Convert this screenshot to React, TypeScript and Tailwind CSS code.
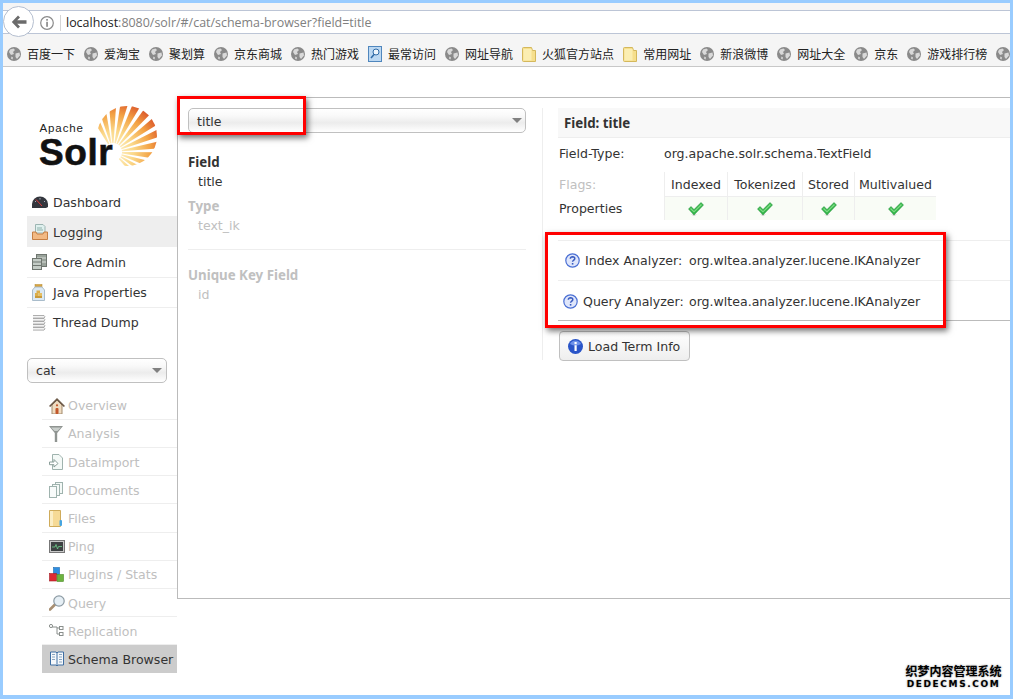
const F = '"DejaVu Sans", Verdana, sans-serif';
const B = '"Noto Sans", "DejaVu Sans", sans-serif';

function Globe() {
  return (
    <svg width="14" height="14" viewBox="0 0 14 14" className="shrink-0">
      <circle cx="7" cy="7" r="7" fill="#8a8a8a" />
      <path d="M3 2.5 6.5 1.5 8 3 6 5 7 7 4 8 2 5ZM8.5 6.5 12.5 5.5 13 8.5 10 12 8.5 10ZM4.5 9.5 6 10.5 5.5 12.5 4 11.5Z" fill="#d9d9d9" />
    </svg>
  );
}
function Folder() {
  return (
    <svg width="14" height="15" viewBox="0 0 14 15" className="shrink-0">
      <path d="M.5 1.5 Q.5.5 1.5.5H9.5L10.5 3.5H13.5V14.5H1.5Q.5 14.5.5 13.5Z" fill="#f6df8d" stroke="#d4b85c" />
      <rect x="1.5" y="2" width="8" height="11.5" fill="#fbeeb2" />
    </svg>
  );
}
function BlueSearch() {
  return (
    <svg width="14" height="16" viewBox="0 0 14 16" className="shrink-0">
      <rect x=".5" y=".5" width="13" height="15" fill="#bcd8f2" stroke="#4f86bd" />
      <circle cx="8" cy="6" r="3" fill="#eef6fd" stroke="#2f6aa6" />
      <path d="M6 8.5 3 12" stroke="#2f6aa6" strokeWidth="1.6" />
    </svg>
  );
}
function Caret() {
  return <div className="w-0 h-0 border-x-[5px] border-x-transparent border-t-[5px] border-t-[#808080]" />;
}
function Check() {
  return (
    <svg width="16" height="14" viewBox="0 0 16 14">
      <path d="M3 12.5 6 14 9 12.5Z" fill="#c8c8c8" />
      <path d="M.5 7 3 4.5 6 7.5 13 .5 15.5 3 6 13Z" fill="#35b54a" stroke="#23913a" strokeWidth=".5" />
      <path d="M2 7 3 6 6 9 13 2 14 3 6 10.5Z" fill="#7fdc85" />
    </svg>
  );
}
function Question() {
  return (
    <svg width="15" height="15" viewBox="0 0 15 15" className="shrink-0">
      <circle cx="7.5" cy="7.5" r="6.7" fill="#dfe6fb" stroke="#4a6fd4" strokeWidth="1.2" />
      <path d="M5.3 5.8Q5.5 3.8 7.6 3.8 9.8 3.9 9.8 5.6 9.8 6.7 8.5 7.3 7.6 7.8 7.6 8.8" fill="none" stroke="#3a5cc0" strokeWidth="1.5" />
      <rect x="6.8" y="10" width="1.6" height="1.6" fill="#3a5cc0" />
    </svg>
  );
}
function Info() {
  return (
    <svg width="15" height="15" viewBox="0 0 15 15" className="shrink-0">
      <circle cx="7.5" cy="7.5" r="7.5" fill="#2a55c8" />
      <path d="M2 5A6 6 0 0 1 13 5Q7.5 8 2 5Z" fill="#6e92ea" />
      <rect x="6.5" y="6.2" width="2.2" height="5.8" fill="#fff" />
      <rect x="6.5" y="3" width="2.2" height="2.2" fill="#fff" />
    </svg>
  );
}

function IDashboard() {
  return (
    <svg width="16" height="12" viewBox="0 0 16 12">
      <path d="M0 12V8A8 7.5 0 0 1 16 8V11L14 12Z" fill="#33363d" />
      <path d="M3 5 4 6M8 2V3.5M13 5 12 6" stroke="#aab" />
      <path d="M4 3.5 10 10" stroke="#e0393a" strokeWidth="1" />
    </svg>
  );
}
function ILogging() {
  return (
    <svg width="16" height="16" viewBox="0 0 16 16">
      <path d="M3.5.5H11L13 2.5V9H3.5Z" fill="#dff0ee" stroke="#9cb5b2" />
      <path d="M5 4H10M5 6H11" stroke="#8fb0aa" />
      <path d="M.5 8H4L5 10H11L12 8H15.5V15.5H.5Z" fill="#f2b983" stroke="#c67f43" />
    </svg>
  );
}
function ICore() {
  return (
    <svg width="15" height="16" viewBox="0 0 15 16">
      <rect x="4.5" y=".5" width="10" height="12" fill="#9aa39b" stroke="#6f7670" />
      <path d="M5 4H14M5 8H14" stroke="#d8dcd8" />
      <rect x=".5" y="4.5" width="9" height="11" fill="#c4ccc6" stroke="#6f7670" />
      <path d="M1 8H9M1 11.5H9" stroke="#6f7670" />
    </svg>
  );
}
function IJava() {
  return (
    <svg width="13" height="17" viewBox="0 0 13 17">
      <rect x="3" y=".5" width="7" height="2.5" fill="#d9a441" stroke="#b58a2f" strokeWidth=".5" />
      <path d="M3 3H10L12.5 6V16.5H.5V6Z" fill="#dce9f3" stroke="#a9bccb" />
      <rect x="3" y="9" width="3.5" height="3" fill="#dcae4a" />
      <rect x="6.5" y="9" width="3.5" height="3" fill="#e6bf63" />
      <rect x="4.5" y="6.5" width="3.5" height="2.5" fill="#dcae4a" />
      <rect x="3" y="12" width="7" height="2" fill="#c99a3a" />
    </svg>
  );
}
function IThread() {
  return (
    <svg width="14" height="16" viewBox="0 0 14 16">
      {[0.5, 3.5, 6.5, 9.5, 12.5].map((y) => (
        <path key={y} d={`M1 ${y}H12Q14 ${y + 1.3} 12 ${y + 2.6}H1`} fill="#f3f3f3" stroke="#9b9b9b" strokeWidth=".8" />
      ))}
    </svg>
  );
}
function IHome() {
  return (
    <svg width="16" height="16" viewBox="0 0 16 16">
      <path d="M3 7 8 2 13 7V16H3Z" fill="#efdcc1" stroke="#a38b6d" />
      <path d="M0 8 8 0 16 8 14.8 9 8 2.6 1.2 9Z" fill="#6d5a49" />
      <rect x="6.5" y="10" width="3" height="6" rx="1" fill="#c2572b" />
      <circle cx="8" cy="7.3" r="1.1" fill="#c2572b" />
    </svg>
  );
}
function IFunnel() {
  return (
    <svg width="14" height="16" viewBox="0 0 14 16">
      <path d="M0 0H14L8.2 7V16H5.8V7Z" fill="#8f9491" />
      <path d="M2 1.5H12L8.5 5H5.5Z" fill="#c9cecb" />
    </svg>
  );
}
function IImport() {
  return (
    <svg width="14" height="16" viewBox="0 0 14 16">
      <path d="M3.5.5H10L13.5 4V15.5H3.5Z" fill="#f4f9f7" stroke="#9fb3ae" />
      <path d="M.5 8H5V5.5L9 9.5 5 13V10.7H.5Z" fill="#fff" stroke="#8a9e99" />
    </svg>
  );
}
function IDocs() {
  return (
    <svg width="14" height="16" viewBox="0 0 14 16">
      <rect x="6.5" y=".5" width="7" height="11" fill="#f4f9f7" stroke="#9fb3ae" />
      <rect x="3.5" y="2.5" width="7" height="11" fill="#f4f9f7" stroke="#9fb3ae" />
      <rect x=".5" y="4.5" width="7" height="11" fill="#f8fbfa" stroke="#9fb3ae" />
    </svg>
  );
}
function IFiles() {
  return (
    <svg width="13" height="17" viewBox="0 0 13 17">
      <path d="M.5.5H11.5V16.5H.5Z" fill="#f6da96" stroke="#cfab5a" />
      <rect x="1" y="1" width="3" height="15" fill="#fbeec6" />
      <rect x="10.5" y="10" width="2.5" height="6" rx="1" fill="#47a5e0" />
    </svg>
  );
}
function IPing() {
  return (
    <svg width="16" height="13" viewBox="0 0 16 13">
      <rect x=".5" y=".5" width="15" height="12" fill="#c8c8c8" stroke="#777" />
      <rect x="2" y="2" width="12" height="9" fill="#3d4142" />
      <path d="M3 7H6L7 4.5 8.5 9 9.5 6.5H13" fill="none" stroke="#6fd08c" strokeWidth=".8" />
    </svg>
  );
}
function IPlugins() {
  return (
    <svg width="15" height="15" viewBox="0 0 15 15">
      <rect x="4.5" y=".5" width="6" height="7" fill="#2f8ee0" stroke="#1f6bb0" strokeWidth=".6" />
      <rect x=".5" y="6.5" width="7" height="7.5" fill="#dc2b34" stroke="#a31c23" strokeWidth=".6" />
      <rect x="8" y="7.5" width="6.5" height="7" fill="#6cb33f" stroke="#4d8a28" strokeWidth=".6" />
    </svg>
  );
}
function IQuery() {
  return (
    <svg width="16" height="16" viewBox="0 0 16 16">
      <path d="M6 9.5 1 14.5" stroke="#a88f72" strokeWidth="2.6" strokeLinecap="round" />
      <circle cx="10" cy="6" r="5.2" fill="#e6eff5" stroke="#8c9aa3" strokeWidth="1.2" />
    </svg>
  );
}
function IReplication() {
  return (
    <svg width="15" height="13" viewBox="0 0 15 13">
      <path d="M3 3H8V10H11M8 4H11" fill="none" stroke="#8a8f8c" />
      <circle cx="2" cy="2" r="1.6" fill="#fff" stroke="#8a8f8c" />
      <rect x="10.5" y="2.5" width="3.5" height="3" fill="#fff" stroke="#8a8f8c" />
      <rect x="10.5" y="8.5" width="3.5" height="3" fill="#fff" stroke="#8a8f8c" />
    </svg>
  );
}
function ISchema() {
  return (
    <svg width="16" height="16" viewBox="0 0 16 16">
      <path d="M1.5 1H7L8 2 9 1H14.5V14H9L8 15 7 14H1.5Z" fill="#f5f8fb" stroke="#3e6ea3" />
      <path d="M8 2V15" stroke="#3e6ea3" />
      <path d="M3 3.5H6M3 6H6M3 8.5H6M10 3.5H13M10 6H13M10 8.5H13M10 11H13" stroke="#8aa5c0" />
    </svg>
  );
}

function Logo() {
  const fx = 75;
  const fy = 47;
  const wedges = Array.from({ length: 13 }, (_, i) => {
    const a0 = ((-122 + i * 13.6) * Math.PI) / 180;
    const a1 = a0 + (8.6 * Math.PI) / 180;
    const r0 = 9;
    const r1 = 80;
    const p = (a: number, r: number) => `${(fx + Math.cos(a) * r).toFixed(1)},${(fy + Math.sin(a) * r).toFixed(1)}`;
    return `${p(a0, r0)} ${p(a0, r1)} ${p(a1, r1)} ${p(a1, r0)}`;
  });
  return (
    <svg width="124" height="76" viewBox="0 0 124 76" className="block">
      <defs>
        <clipPath id="sunclip">
          <circle cx="89" cy="31" r="30" />
        </clipPath>
        <radialGradient id="sungrad" gradientUnits="userSpaceOnUse" cx="75" cy="47" r="58">
          <stop offset="0" stopColor="#fff6d6" />
          <stop offset="0.35" stopColor="#fbd98a" />
          <stop offset="0.65" stopColor="#f3a244" />
          <stop offset="0.85" stopColor="#e0662f" />
          <stop offset="1" stopColor="#c33a28" />
        </radialGradient>
      </defs>
      <g clipPath="url(#sunclip)">
        {wedges.map((pts) => (
          <polygon key={pts} points={pts} fill="url(#sungrad)" />
        ))}
      </g>
      <text x="1.5" y="27" fontFamily='"Liberation Sans", Arial, sans-serif' fontSize="11.5" fill="#222" letterSpacing=".9">Apache</text>
      <text x="1" y="60" fontFamily='"Liberation Sans", Arial, sans-serif' fontWeight="700" fontSize="37" fill="#111" stroke="#111" strokeWidth=".6" letterSpacing=".6">Solr</text>
    </svg>
  );
}

const bookmarks: [string, string][] = [
  ['g', '百度一下'], ['g', '爱淘宝'], ['g', '聚划算'], ['g', '京东商城'], ['g', '热门游戏'], ['s', '最常访问'],
  ['g', '网址导航'], ['f', '火狐官方站点'], ['f', '常用网址'], ['g', '新浪微博'], ['g', '网址大全'], ['g', '京东'], ['g', '游戏排行榜'], ['g', ''],
];

const topNav: [string, () => React.ReactElement, string, string][] = [
  ['Dashboard', IDashboard, 'h-[30px]', 'pt-[2px]'],
  ['Logging', ILogging, 'h-[31px] -mt-px bg-[#eeeeee]', 'pt-[4px]'],
  ['Core Admin', ICore, 'h-[31px] border-b border-[#eeeeee]', 'pt-[2px]'],
  ['Java Properties', IJava, 'h-[30px] border-b border-[#eeeeee]', 'pt-[2px]'],
  ['Thread Dump', IThread, 'h-[30px]', 'pt-0'],
];

const subNav: [string, () => React.ReactElement, string, string][] = [
  ['Overview', IHome, 'h-[28px]', 'pt-[1px]'],
  ['Analysis', IFunnel, 'h-[28px]', 'pt-[1px]'],
  ['Dataimport', IImport, 'h-[28px]', 'pt-[3px]'],
  ['Documents', IDocs, 'h-[28px]', 'pt-[3px]'],
  ['Files', IFiles, 'h-[29px]', 'pt-[3px]'],
  ['Ping', IPing, 'h-[28px]', 'pt-[1px]'],
  ['Plugins / Stats', IPlugins, 'h-[28px]', 'pt-[1px]'],
  ['Query', IQuery, 'h-[28px]', 'pt-[3px]'],
  ['Replication', IReplication, 'h-[28px]', 'pt-[3px]'],
];

function Select({ label, className, textClass }: { label: string; className: string; textClass: string }) {
  return (
    <div className={`flex items-center justify-between border border-[#c0c0c0] rounded-[5px] bg-[linear-gradient(to_bottom,#ffffff_0%,#f9f9f9_30%,#ececec_60%,#f8f8f8_85%,#ffffff_100%)] text-[#333] ${className}`}>
      <span className={textClass}>{label}</span>
      <Caret />
    </div>
  );
}

export default function App() {
  return (
    <div
      className="relative w-[1013px] h-[699px] overflow-hidden bg-[#99ccff] pt-[3px] pl-[3px] pr-[3px] pb-[4px]"
      style={{ fontFamily: F }}
    >
      <div className="h-full bg-white flex flex-col">
        {/* browser chrome */}
        <div className="h-[8px] bg-[#f5f5f5] border-b border-[#bcc5d6]" />
        <div className="h-[23px] bg-white border-b border-[#bcc5d6] flex items-center pl-[37px] pt-[2px]">
          <svg width="14" height="14" viewBox="0 0 14 14" className="shrink-0">
            <circle cx="7" cy="7" r="6.3" fill="none" stroke="#8a8a8a" strokeWidth="1.2" />
            <rect x="6.2" y="3" width="1.7" height="1.7" fill="#8a8a8a" />
            <rect x="6.2" y="5.8" width="1.7" height="5" fill="#8a8a8a" />
          </svg>
          <div className="w-px h-[16px] bg-[#d5d5d5] ml-[6px] mr-[5px]" />
          <div className="text-[12.45px] leading-none text-[#808080]" style={{ fontFamily: '"Open Sans", sans-serif' }}>
            <span className="text-[#222]">localhost</span>:8080/solr/#/cat/schema-browser?field=title
          </div>
        </div>
        <div className="h-[33px] bg-[#f5f5f5] border-b border-[#c8c8c8] flex items-center pl-[4px] pt-[8px] gap-[9px] overflow-hidden whitespace-nowrap">
          {bookmarks.map(([k, t], i) => (
            <div key={i} className="flex items-center gap-[6px] shrink-0">
              {k === 'g' ? <Globe /> : k === 'f' ? <Folder /> : <BlueSearch />}
              {t && (
                <span className="text-[12px] text-[#222]" style={{ fontFamily: '"Noto Sans CJK SC", sans-serif' }}>
                  {t}
                </span>
              )}
            </div>
          ))}
        </div>

        {/* page */}
        <div className="flex-1 flex items-start pt-[30px]">
          <aside className="w-[174px] shrink-0 text-[12.55px] text-[#333] whitespace-nowrap">
            <div className="pl-[35px] pt-[8px] h-[90px]">
              <Logo />
            </div>
            <nav className="ml-[24px]">
              {topNav.map(([label, Icon, cls, txt]) => (
                <div key={label} className={`flex items-center pl-[5px] ${cls}`}>
                  <span className="w-[21px] flex justify-start">
                    <Icon />
                  </span>
                  <span className={txt}>{label}</span>
                </div>
              ))}
            </nav>
            <div className="ml-[24px] mt-[20px]">
              <Select label="cat" textClass="pt-[2px]" className="w-[140px] h-[25px] pl-[8px] pr-[4px]" />
            </div>
            <nav className="ml-[39px] mt-[9px]">
              {subNav.map(([label, Icon, cls, txt]) => (
                <div key={label} className={`flex items-center pl-[7px] text-[#c0c0c0] border-b border-[#eeeeee] ${cls}`}>
                  <span className="w-[19px] flex justify-start">
                    <Icon />
                  </span>
                  <span className={txt}>{label}</span>
                </div>
              ))}
              <div className="flex items-center pl-[7px] h-[28px] bg-[#cccccc] text-[#333]">
                <span className="w-[19px] flex justify-start">
                  <ISchema />
                </span>
                <span className="pt-[2px]">Schema Browser</span>
              </div>
            </nav>
          </aside>

          <main className="flex-1 min-w-0 h-[502px] border-t border-b border-l border-[#bbbbbb] pt-[10px] pl-[10px] flex items-start text-[12.55px] text-[#333]">
            <div className="w-[338px] shrink-0">
              <Select label="title" textClass="pt-[4px]" className="h-[25px] pl-[8px] pr-[3px]" />
              <div className="mt-[20px] leading-[19px]">
                <div className="font-bold text-[13.3px]" style={{ fontFamily: B }}>Field</div>
                <div className="pl-[10px]">title</div>
                <div className="font-bold text-[13.3px] text-[#c0c0c0] mt-[6px]" style={{ fontFamily: B }}>Type</div>
                <div className="pl-[10px] text-[#c0c0c0]">text_ik</div>
              </div>
              <div className="h-px bg-[#eeeeee] mt-[14px]" />
              <div className="mt-[16px] leading-[19px] text-[#c0c0c0]">
                <div className="font-bold text-[13.3px]" style={{ fontFamily: B }}>Unique Key Field</div>
                <div className="pl-[10px]">id</div>
              </div>
            </div>

            <div className="ml-[16px] flex-1 min-w-0 h-[252px] border-l border-[#eeeeee] pl-[15px]">
              <div className="h-[30px] bg-[#f8f8f8] border-b border-[#eeeeee] flex items-center pl-[6px] pt-[2px] font-bold text-[13.3px]" style={{ fontFamily: B }}>
                Field: title
              </div>
              <div className="flex items-center h-[31px] pl-px pt-[2px]">
                <span className="w-[105px]">Field-Type:</span>
                <span>org.apache.solr.schema.TextField</span>
              </div>
              <div className="flex h-[25px] pl-px items-center mt-[3px]">
                <span className="w-[105px] text-[#c0c0c0] pt-[2px]">Flags:</span>
                <div className="flex h-full border-b border-[#eeeeee]">
                  {[['Indexed', 'w-[63px]'], ['Tokenized', 'w-[75px]'], ['Stored', 'w-[52px]'], ['Multivalued', 'w-[82px]']].map(([t, w]) => (
                    <div key={t} className={`flex items-center justify-center border-l border-[#eeeeee] pt-[2px] ${w}`}>{t}</div>
                  ))}
                </div>
              </div>
              <div className="flex h-[23px] pl-px items-center">
                <span className="w-[105px] pt-[2px]">Properties</span>
                <div className="flex h-full bg-[#f9fcf6]">
                  {['w-[63px]', 'w-[75px]', 'w-[52px]', 'w-[82px]'].map((w) => (
                    <div key={w} className={`flex items-center justify-center border-l border-[#eeeeee] ${w}`}>
                      <Check />
                    </div>
                  ))}
                </div>
              </div>
              <div className="mt-[20px] border-t border-[#eeeeee] h-[40px] flex items-center pl-[7px]">
                <Question />
                <span className="ml-[5px] w-[104px] pt-[2px]">Index Analyzer:</span>
                <span className="pt-[2px]">org.wltea.analyzer.lucene.IKAnalyzer</span>
              </div>
              <div className="border-t border-[#eeeeee] border-b border-b-[#bbbbbb] h-[41px] flex items-center pl-[5px] pt-[2px]">
                <Question />
                <span className="ml-[5px] w-[106px] pt-[2px]">Query Analyzer:</span>
                <span className="pt-[2px]">org.wltea.analyzer.lucene.IKAnalyzer</span>
              </div>
              <div className="mt-[10px] ml-px w-[131px] h-[30px] border border-[#c0c0c0] rounded-[4px] bg-gradient-to-b from-white to-[#eeeeee] flex items-center pl-[8px] gap-[5px] whitespace-nowrap">
                <Info />
                <span className="pt-[2px]">Load Term Info</span>
              </div>
            </div>
          </main>
        </div>
      </div>

      {/* back button overlays the toolbar */}
      <div className="absolute left-[3px] top-[6px] w-[31px] h-[31px] rounded-full bg-white border border-[#b5bfd0] flex items-center justify-center">
        <svg width="16" height="14" viewBox="0 0 16 14">
          <path d="M7 .5 .8 7 7 13.5 9 11.6 6.2 8.7H15.5V5.3H6.2L9 2.4Z" fill="#6b6b6b" />
        </svg>
      </div>

      {/* annotation boxes */}
      <div className="absolute left-[177px] top-[96px] w-[129px] h-[39px] border-[3px] border-[#ff0000] shadow-[2px_3px_6px_rgba(0,0,0,0.55)]" />
      <div className="absolute left-[545px] top-[232px] w-[401px] h-[96px] border-[3px] border-[#ff0000] shadow-[2px_3px_6px_rgba(0,0,0,0.55)]" />

      {/* watermark */}
      <div className="absolute left-[904px] top-[663px] w-[99px] text-black font-bold text-center [text-shadow:0_0_2px_#888]">
        <div className="text-[12px] leading-[15px] whitespace-nowrap" style={{ fontFamily: '"Noto Sans CJK SC", sans-serif' }}>织梦内容管理系统</div>
        <div className="text-[9px] leading-[12px] tracking-[1.6px] whitespace-nowrap">DEDECMS.COM</div>
      </div>
    </div>
  );
}
